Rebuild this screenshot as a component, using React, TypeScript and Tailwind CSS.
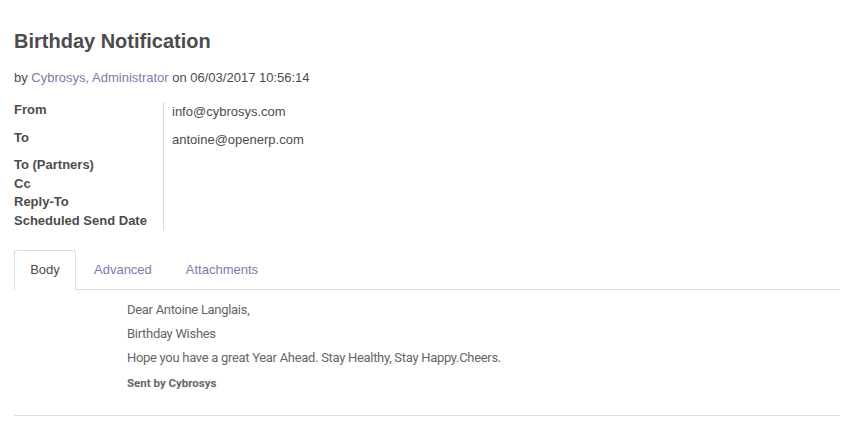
import React from "react";

export default function App() {
  return (
    <div className="w-[856px] h-[431px] bg-white text-[#4c4c4c] font-['Liberation_Sans',Arial,sans-serif]">
      <div className="pl-[14px] pr-[16px] pt-[29px]">
        <h1 className="text-[20px] leading-[24px] font-bold text-[#4c4c4c]">Birthday Notification</h1>
        <div className="mt-[17px] text-[13px] leading-[16px]">
          by <span className="text-[#7c7bad]">Cybrosys, Administrator</span> on 06/03/2017 10:56:14
        </div>
        <div className="mt-[16px] flex">
          <div className="w-[150px] border-r border-[#d9d9d9] text-[13px] font-bold leading-[16px]">
            <div className="h-[28px]">From</div>
            <div className="h-[27px]">To</div>
            <div className="h-[19px]">To (Partners)</div>
            <div className="h-[18px]">Cc</div>
            <div className="h-[19px]">Reply-To</div>
            <div className="h-[17px]">Scheduled Send Date</div>
          </div>
          <div className="pl-[8px] text-[13px] leading-[16px] pt-[2px]">
            <div className="h-[28px]">info@cybrosys.com</div>
            <div className="h-[27px]">antoine@openerp.com</div>
          </div>
        </div>
        <div className="mt-[20px] flex border-b border-[#dddddd] text-[13px] leading-[16px]">
          <div className="w-[62px] h-[40px] -mb-px border border-[#dddddd] border-b-white rounded-t-[3px] bg-white flex items-center justify-center text-[#4c4c4c]">
            Body
          </div>
          <div className="ml-[18px] h-[39px] flex items-center text-[#7c7bad]">Advanced</div>
          <div className="ml-[34px] h-[39px] flex items-center text-[#7c7bad]">Attachments</div>
        </div>
        <div className="pl-[113px] pt-[11px] pb-[24px] text-[13px] text-[#666666] font-['Roboto',sans-serif] tracking-[-0.3px]">
          <div className="leading-[18px]">Dear Antoine Langlais,</div>
          <div className="leading-[18px] mt-[6px]">Birthday Wishes</div>
          <div className="leading-[18px] mt-[6px]">Hope you have a great Year Ahead. Stay Healthy, Stay Happy.Cheers.</div>
          <div className="leading-[16px] mt-[8px] text-[11.5px] font-bold tracking-normal">Sent by Cybrosys</div>
        </div>
        <div className="border-b border-[#dddddd]" />
      </div>
    </div>
  );
}
